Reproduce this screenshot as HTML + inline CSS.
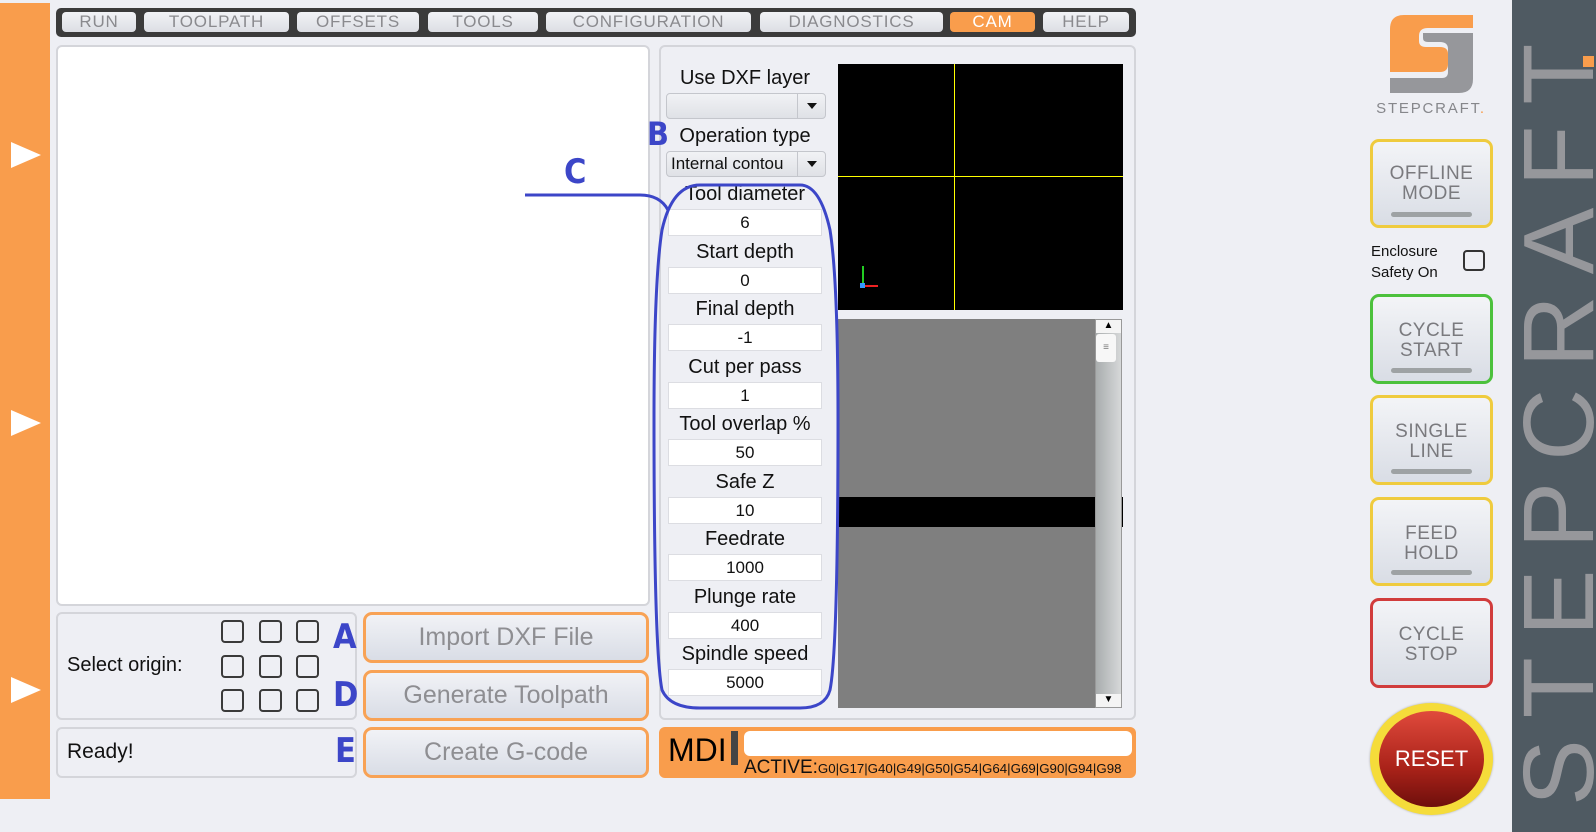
<!DOCTYPE html>
<html><head><meta charset="utf-8"><style>
*{box-sizing:border-box;margin:0;padding:0}
body{width:1596px;height:832px;background:#eeeff4;position:relative;overflow:hidden;font-family:"Liberation Sans",sans-serif}
.a{position:absolute}
.tri{position:absolute;left:11px;width:0;height:0;border-top:13px solid transparent;border-bottom:13px solid transparent;border-left:30px solid #fff}
.tab{position:absolute;top:12px;height:20px;border-radius:4px;background:linear-gradient(#f2f3f6,#dcdee4);color:#8a8a8e;font-size:17px;line-height:20px;text-align:center;letter-spacing:.8px}
.panel{position:absolute;border:2px solid #d4d5da;border-radius:6px;background:#eeeff4}
.lbl{position:absolute;left:660px;width:170px;text-align:center;font-size:20px;color:#111}
.inp{position:absolute;left:668px;width:154px;height:27px;background:#fff;border:1px solid #dcdde2;text-align:center;font-size:17px;line-height:26px;color:#111}
.cb{position:absolute;width:23px;height:23px;border:2px solid #3a3a3a;border-radius:4px}
.bl{position:absolute;color:#3c46c8;font-size:34px;font-weight:bold;font-family:"DejaVu Sans Condensed","DejaVu Sans",sans-serif}
.ob{position:absolute;left:363px;width:286px;height:51px;border:3px solid #f8a255;border-radius:9px;background:linear-gradient(#f1f2f6,#d9dde6);color:#8e8e92;font-size:25px;text-align:center;line-height:44px}
.sb{position:absolute;left:1370px;width:123px;border-radius:9px;border:3px solid;background:linear-gradient(#f3f4f7,#d9dde5);color:#7a7a7e;font-size:19px;text-align:center;line-height:20px;letter-spacing:.5px}
.sb i{position:absolute;left:18px;right:18px;bottom:8px;height:5px;border-radius:3px;background:#9ea2a4}
.dd{position:absolute;left:666px;width:160px;height:26px;border:1px solid #c4c6cc;border-radius:4px;background:linear-gradient(#f1f2f5,#dfe1e6);font-size:17px;line-height:24px;padding-left:4px;color:#111}
.dd b{position:absolute;right:0;top:0;width:28px;height:24px;border-left:1px solid #c4c6cc}
.dd b:after{content:"";position:absolute;left:9px;top:9px;border-left:5px solid transparent;border-right:5px solid transparent;border-top:6px solid #111}
</style></head><body>
<div class="a" style="left:0;top:3px;width:50px;height:796px;background:#f99d4c"></div>
<div class="tri" style="top:142px"></div>
<div class="tri" style="top:410px"></div>
<div class="tri" style="top:677px"></div>

<div class="a" style="left:56px;top:8px;width:1080px;height:29px;background:#3b3b3b;border-radius:5px"></div>
<div class="tab" style="left:62px;width:74px">RUN</div>
<div class="tab" style="left:144px;width:145px">TOOLPATH</div>
<div class="tab" style="left:297px;width:122px">OFFSETS</div>
<div class="tab" style="left:428px;width:110px">TOOLS</div>
<div class="tab" style="left:546px;width:205px">CONFIGURATION</div>
<div class="tab" style="left:760px;width:183px">DIAGNOSTICS</div>
<div class="tab" style="left:950px;width:85px;background:#f99d4c;color:#fff">CAM</div>
<div class="tab" style="left:1043px;width:86px">HELP</div>

<div class="a" style="left:56px;top:45px;width:594px;height:561px;background:#fff;border:2px solid #d4d5da;border-radius:6px"></div>
<div class="panel" style="left:659px;top:45px;width:477px;height:675px"></div>

<div class="lbl" style="top:67px">Use DXF layer</div>
<div class="dd" style="top:93px"><b></b></div>
<div class="lbl" style="top:125px">Operation type</div>
<div class="dd" style="top:151px">Internal contou<b></b></div>

<div class="lbl" style="top:183px">Tool diameter</div><div class="inp" style="top:209px">6</div>
<div class="lbl" style="top:241px">Start depth</div><div class="inp" style="top:267px">0</div>
<div class="lbl" style="top:298px">Final depth</div><div class="inp" style="top:324px">-1</div>
<div class="lbl" style="top:356px">Cut per pass</div><div class="inp" style="top:382px">1</div>
<div class="lbl" style="top:413px">Tool overlap %</div><div class="inp" style="top:439px">50</div>
<div class="lbl" style="top:471px">Safe Z</div><div class="inp" style="top:497px">10</div>
<div class="lbl" style="top:528px">Feedrate</div><div class="inp" style="top:554px">1000</div>
<div class="lbl" style="top:586px">Plunge rate</div><div class="inp" style="top:612px">400</div>
<div class="lbl" style="top:643px">Spindle speed</div><div class="inp" style="top:669px">5000</div>

<div class="a" style="left:838px;top:64px;width:285px;height:246px;background:#000">
 <div class="a" style="left:116px;top:0;width:1px;height:246px;background:#ff0"></div>
 <div class="a" style="left:0;top:112px;width:285px;height:1px;background:#ff0"></div>
 <div class="a" style="left:24px;top:202px;width:2px;height:20px;background:#2c2"></div>
 <div class="a" style="left:24px;top:221px;width:16px;height:2px;background:#e22"></div>
 <div class="a" style="left:22px;top:219px;width:5px;height:5px;background:#39f"></div>
</div>
<div class="a" style="left:838px;top:319px;width:257px;height:389px;background:#7f7f7f"></div>
<div class="a" style="left:838px;top:497px;width:285px;height:30px;background:#000"></div>
<div class="a" style="left:1095px;top:319px;width:27px;height:389px;background:linear-gradient(90deg,#a9adae,#d6d8d9);border:1px solid #999"></div>
<div class="a" style="left:1096px;top:320px;width:25px;height:13px;background:#f4f4f4;font-size:10px;text-align:center;line-height:12px">▲</div>
<div class="a" style="left:1096px;top:334px;width:20px;height:28px;background:#f7f7f7;border-radius:3px;font-size:10px;text-align:center;line-height:28px;color:#777">≡</div>
<div class="a" style="left:1096px;top:694px;width:25px;height:13px;background:#f4f4f4;font-size:10px;text-align:center;line-height:12px">▼</div>

<svg class="a" style="left:0;top:0" width="1596" height="832">
 <path d="M525 195 H640 Q660 195 668 210" fill="none" stroke="#3c46c8" stroke-width="3"/>
 <path d="M700 185 H800 Q820 185 830 230 Q838 280 838 420 Q838 650 830 690 Q825 708 800 708 H700 Q670 708 662 690 Q654 650 654 420 Q654 280 662 230 Q672 185 700 185 Z" fill="none" stroke="#3c46c8" stroke-width="3"/>
</svg>
<div class="bl" style="left:564px;top:152px">C</div>
<div class="bl" style="left:647px;top:115px;font-size:32px">B</div>

<div class="panel" style="left:56px;top:612px;width:301px;height:108px"></div>
<div class="a" style="left:67px;top:654px;font-size:20px;color:#111">Select origin:</div>
<div class="cb" style="left:221px;top:620px"></div><div class="cb" style="left:259px;top:620px"></div><div class="cb" style="left:296px;top:620px"></div>
<div class="cb" style="left:221px;top:655px"></div><div class="cb" style="left:259px;top:655px"></div><div class="cb" style="left:296px;top:655px"></div>
<div class="cb" style="left:221px;top:689px"></div><div class="cb" style="left:259px;top:689px"></div><div class="cb" style="left:296px;top:689px"></div>
<div class="panel" style="left:56px;top:727px;width:301px;height:51px"></div>
<div class="a" style="left:67px;top:740px;font-size:21px;color:#111">Ready!</div>
<div class="bl" style="left:333px;top:617px">A</div>
<div class="bl" style="left:333px;top:675px">D</div>
<div class="bl" style="left:335px;top:731px">E</div>

<div class="ob" style="top:612px">Import DXF File</div>
<div class="ob" style="top:670px">Generate Toolpath</div>
<div class="ob" style="top:727px">Create G-code</div>

<div class="a" style="left:659px;top:727px;width:477px;height:51px;background:#f99d4c;border-radius:6px"></div>
<div class="a" style="left:668px;top:732px;font-size:32px;color:#000">MDI</div>
<div class="a" style="left:731px;top:731px;width:7px;height:34px;background:#444"></div>
<div class="a" style="left:744px;top:731px;width:388px;height:25px;background:#fff;border-radius:6px"></div>
<div class="a" style="left:744px;top:757px;font-size:19px;color:#111;white-space:nowrap">ACTIVE:<span style="font-size:13.3px">G0|G17|G40|G49|G50|G54|G64|G69|G90|G94|G98</span></div>

<svg class="a" style="left:1390px;top:14px" width="84" height="80" viewBox="0 0 84 80">
 <path d="M14 1 H83 V14 H38 Q29 14 29 22 V27 Q29 33 36 33 H50 Q58 33 58 40 V50 Q58 58 50 58 H0 V15 Q0 1 14 1 Z" fill="#f99d4c"/>
 <path d="M33 19 H83 V65 Q83 79 69 79 H0 V64 H52 Q58 64 58 58 V35 Q58 28 50 28 H38 Q33 28 33 24 Z" fill="#96979b"/>
</svg>
<div class="a" style="left:1360px;top:100px;width:142px;text-align:center;font-size:15px;color:#86878b;letter-spacing:1.8px">STEPCRAFT<span style="color:#f99d4c">.</span></div>

<div class="sb" style="top:139px;height:89px;border-color:#efcb3e;padding-top:22px">OFFLINE<br>MODE<i></i></div>
<div class="a" style="left:1371px;top:241px;font-size:15px;color:#111;line-height:21px">Enclosure<br>Safety On</div>
<div class="a" style="left:1463px;top:250px;width:22px;height:21px;border:2px solid #333;border-radius:4px"></div>
<div class="sb" style="top:294px;height:90px;border-color:#4cc13c;padding-top:24px">CYCLE<br>START<i></i></div>
<div class="sb" style="top:395px;height:90px;border-color:#efcb3e;padding-top:24px">SINGLE<br>LINE<i></i></div>
<div class="sb" style="top:497px;height:89px;border-color:#efcb3e;padding-top:24px">FEED<br>HOLD<i></i></div>
<div class="sb" style="top:598px;height:90px;border-color:#d13c3c;padding-top:24px">CYCLE<br>STOP</div>
<div class="a" style="left:1370px;top:703px;width:123px;height:112px;border-radius:50%;background:#f5dc3a;box-shadow:0 0 2px #aaa"></div>
<div class="a" style="left:1379px;top:711px;width:105px;height:96px;border-radius:50%;background:linear-gradient(#e04a3c,#a92219 60%,#6e0f0c);color:#fff;font-size:22px;text-align:center;line-height:96px">RESET</div>

<div class="a" style="left:1512px;top:0;width:84px;height:832px;background:#4f5a62"></div>
<div class="a" style="left:1509px;top:806px;transform-origin:0 0;transform:rotate(-90deg);font-size:100px;line-height:100px;color:#96979b;letter-spacing:21px;white-space:nowrap">STEPCRAFT</div>
<div class="a" style="left:1583px;top:56px;width:11px;height:11px;background:#f99d4c"></div>
</body></html>
